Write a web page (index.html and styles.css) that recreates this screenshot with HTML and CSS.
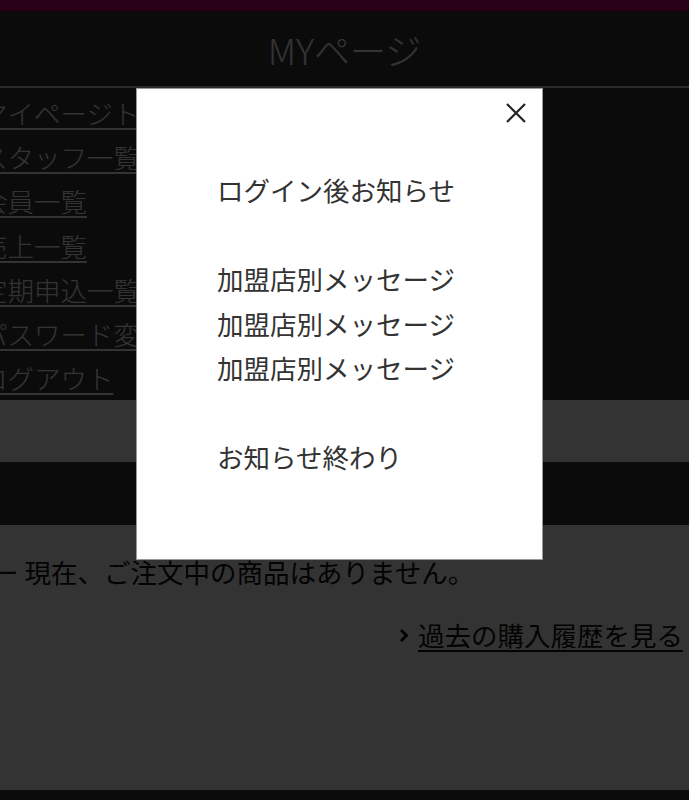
FILE: index.html
```html
<!DOCTYPE html>
<html lang="ja">
<head>
    <meta charset="UTF-8">
    <meta name="viewport" content="width=device-width, initial-scale=1.0">
    <link rel="stylesheet" href="styles.css">
</head>
<body>

    <div class="top-bar"></div>
    <header class="page-header">MYページ</header>

    <ul class="side-menu">
        <li><a href="#">マイページトップ</a></li>
        <li><a href="#">スタッフ一覧</a></li>
        <li><a href="#">会員一覧</a></li>
        <li><a href="#">売上一覧</a></li>
        <li><a href="#">定期申込一覧</a></li>
        <li><a href="#">パスワード変更</a></li>
        <li><a href="#">ログアウト</a></li>
    </ul>

    <div class="spacer-band"></div>
    <div class="section-title"></div>

    <main class="order-area">
        <p class="no-order">ー 現在、ご注文中の商品はありません。</p>
        <div class="history-row">
            <svg class="chevron" width="10" height="15" viewBox="0 0 10 15">
                <path d="M2 2 L7.5 7.5 L2 13" fill="none" stroke="#000" stroke-width="2.8"/>
            </svg>
            <a href="#" class="history-link">過去の購入履歴を見る</a>
        </div>
    </main>

    <footer class="page-footer"></footer>

    <!-- notice popup shown after login -->
    <div class="backdrop"></div>
    <div class="notice-modal">
        <button class="close-button" aria-label="閉じる">
            <svg width="22" height="22" viewBox="0 0 22 22">
                <path d="M2 2 L20 20 M20 2 L2 20" stroke="#222" stroke-width="2.2"/>
            </svg>
        </button>
        <div class="notice-body">
            ログイン後お知らせ<br>
            <br>
            加盟店別メッセージ<br>
            加盟店別メッセージ<br>
            加盟店別メッセージ<br>
            <br>
            お知らせ終わり
        </div>
    </div>

</body>
</html>
```

FILE: styles.css
```css
body {
    margin: 0;
    padding: 0;
    font-family: "Noto Sans CJK JP", "Noto Sans", sans-serif;
    background-color: #ffffff;
    overflow: hidden;
    height: 800px;
}

.top-bar {
    height: 11px;
    background-color: #c8007a;
}

.page-header {
    height: 75px;
    border-bottom: 2px solid #d4d4d4;
    background-color: #373737;
    color: #fff;
    font-size: 36px;
    font-weight: 300;
    display: flex;
    justify-content: center;
    align-items: center;
}

.side-menu {
    list-style: none;
    margin: 0;
    padding: 2px 0 0 0;
    background-color: #373737;
}

.side-menu li {
    height: 44.3px;
    display: flex;
    align-items: center;
    margin-left: -19px;
    white-space: nowrap;
}

.side-menu a {
    color: #fff;
    font-size: 26.5px;
    font-weight: 300;
    text-underline-offset: 4px;
}

.spacer-band {
    height: 62px;
    background-color: #fff;
}

.section-title {
    height: 63px;
    background-color: #373737;
}

.order-area {
    height: 265px;
    padding: 28px 6px 0 0;
    box-sizing: border-box;
    background-color: #fff;
}

.no-order {
    margin: 0 0 0 -8px;
    font-size: 26.5px;
    line-height: 38px;
    color: #111;
    white-space: nowrap;
}

.history-row {
    margin-top: 25px;
    display: flex;
    justify-content: flex-end;
    align-items: center;
    gap: 9px;
    font-size: 26.5px;
    line-height: 38px;
}

.chevron {
    display: block;
}

.history-link {
    color: #111;
    text-underline-offset: 4px;
}

.page-footer {
    height: 10px;
    background-color: #373737;
}

.backdrop {
    position: fixed;
    top: 0;
    left: 0;
    right: 0;
    bottom: 0;
    background: rgba(0, 0, 0, 0.8);
}

.notice-modal {
    position: fixed;
    top: 88px;
    left: 136px;
    width: 407px;
    height: 472px;
    box-sizing: border-box;
    background-color: #fff;
    border: 1px solid #9a9a9a;
}

.close-button {
    position: absolute;
    top: 13px;
    right: 15px;
    padding: 0;
    border: none;
    background: none;
    cursor: pointer;
}

.close-button svg {
    display: block;
}

.notice-body {
    padding: 79px 0 0 80px;
    font-size: 26.5px;
    line-height: 44.5px;
    color: #333;
    white-space: nowrap;
}
```
